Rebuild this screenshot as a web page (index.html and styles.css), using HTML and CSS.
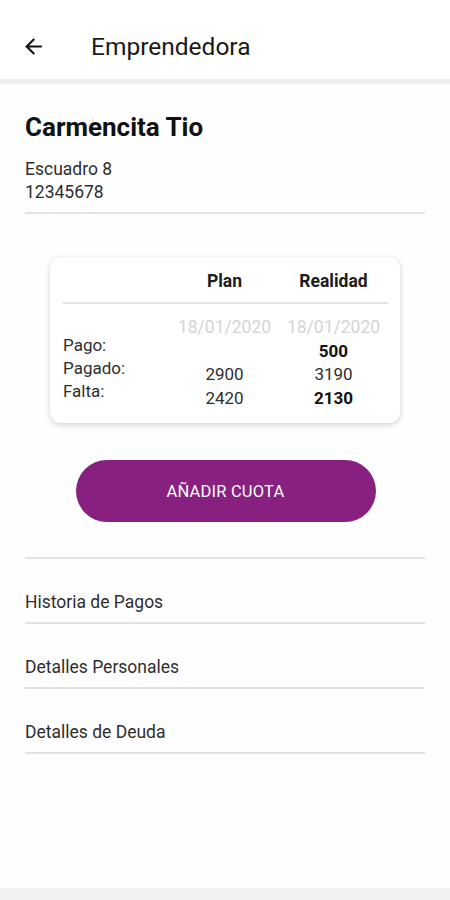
FILE: index.html
```html
<!DOCTYPE html>
<html lang="es">
<head>
<meta charset="utf-8">
<link rel="stylesheet" href="styles.css">
</head>
<body>
<div class="screen">
  <header class="appbar">
    <svg class="back" width="24" height="24" viewBox="0 0 24 24"><path d="M20 11H7.83l5.59-5.59L12 4l-8 8 8 8 1.41-1.41L7.83 13H20v-2z" fill="#111"/></svg>
    <h1 class="title">Emprendedora</h1>
  </header>
  <main class="content">
    <section class="profile">
      <h2 class="name">Carmencita Tio</h2>
      <p class="meta">Escuadro 8</p>
      <p class="meta">12345678</p>
    </section>
    <div class="card">
      <div class="card-head">
        <span class="col-label"></span>
        <span class="col">Plan</span>
        <span class="col">Realidad</span>
      </div>
      <div class="card-body">
        <div class="labels">
          <span>Pago:</span>
          <span>Pagado:</span>
          <span>Falta:</span>
        </div>
        <div class="values">
          <span class="date">18/01/2020</span>
          <span>&nbsp;</span>
          <span>2900</span>
          <span>2420</span>
        </div>
        <div class="values">
          <span class="date">18/01/2020</span>
          <span class="strong">500</span>
          <span>3190</span>
          <span class="strong">2130</span>
        </div>
      </div>
    </div>
    <div class="btn-wrap">
      <button class="btn">AÑADIR CUOTA</button>
    </div>
    <ul class="menu">
      <li>Historia de Pagos</li>
      <li>Detalles Personales</li>
      <li>Detalles de Deuda</li>
    </ul>
  </main>
  <div class="bottom"></div>
</div>
</body>
</html>
```
FILE: styles.css
```css
* { box-sizing: border-box; }
html, body { margin: 0; padding: 0; }
body {
  font-family: Roboto, "Noto Sans", sans-serif;
  color: #1c1c1c;
  background: #fefefe;
  width: 450px;
  height: 900px;
  overflow: hidden;
}
.screen { display: flex; flex-direction: column; height: 900px; }
.appbar {
  display: flex;
  align-items: center;
  background: #fff;
  border-bottom: 5px solid #efefef;
  padding-left: 21px;
  padding-top: 13px;
  flex-shrink: 0;
  height: 84px;
}
.back { width: 25px; height: 25px; }
.title {
  margin: 0 0 0 45px;
  font-size: 24.5px;
  font-weight: 400;
  color: #1a1a1a;
}
.content { flex: 1; padding: 0 25px; }
.profile {
  padding-top: 27px;
  padding-bottom: 8px;
  border-bottom: 2px solid #e2e2e2;
}
.name {
  margin: 0 0 15px;
  font-size: 26px;
  font-weight: 700;
  line-height: 32px;
  color: #111;
}
.meta {
  margin: 0;
  font-size: 17.5px;
  line-height: 23px;
  color: #2e2e2e;
}
.card {
  margin: 43px 25px 0;
  background: #fff;
  border-radius: 11px;
  box-shadow: 0 2px 6px rgba(0,0,0,0.16), 0 0 2px rgba(0,0,0,0.06);
  padding: 0 12px 13px 13px;
}
.card-head {
  display: grid;
  grid-template-columns: 107px 109px 109px;
  height: 47px;
  align-items: center;
  border-bottom: 2px solid #e4e4e4;
  font-weight: 700;
  font-size: 17.5px;
  padding-top: 3px;
}
.col { text-align: center; }
.card-body {
  display: grid;
  grid-template-columns: 107px 109px 109px;
  padding-top: 12px;
  font-size: 17px;
}
.labels { display: flex; flex-direction: column; padding-top: 18px; color: #2e2e2e; }
.labels span { line-height: 23px; }
.values { display: flex; flex-direction: column; align-items: center; color: #2e2e2e; }
.values span { line-height: 23.5px; }
.date { color: #d4d4d4; font-size: 17.5px; }
.strong { font-weight: 700; color: #111; }
.btn-wrap { display: flex; justify-content: center; margin-top: 37px; }
.btn {
  width: 300px;
  height: 62px;
  border: none;
  border-radius: 31px;
  background: #88207f;
  color: #fff;
  font-family: Roboto, sans-serif;
  font-size: 16.5px;
  font-weight: 400;
  letter-spacing: 0.2px;
  margin-left: 1px;
}
.menu {
  list-style: none;
  margin: 35px 0 0;
  padding: 0;
  border-top: 2px solid #e2e2e2;
}
.menu li {
  height: 65px;
  padding-top: 32px;
  font-size: 17.5px;
  line-height: 22px;
  color: #2e2e2e;
  border-bottom: 2px solid #e2e2e2;
}
.bottom { height: 12px; background: #f0f1f1; flex-shrink: 0; }
```
